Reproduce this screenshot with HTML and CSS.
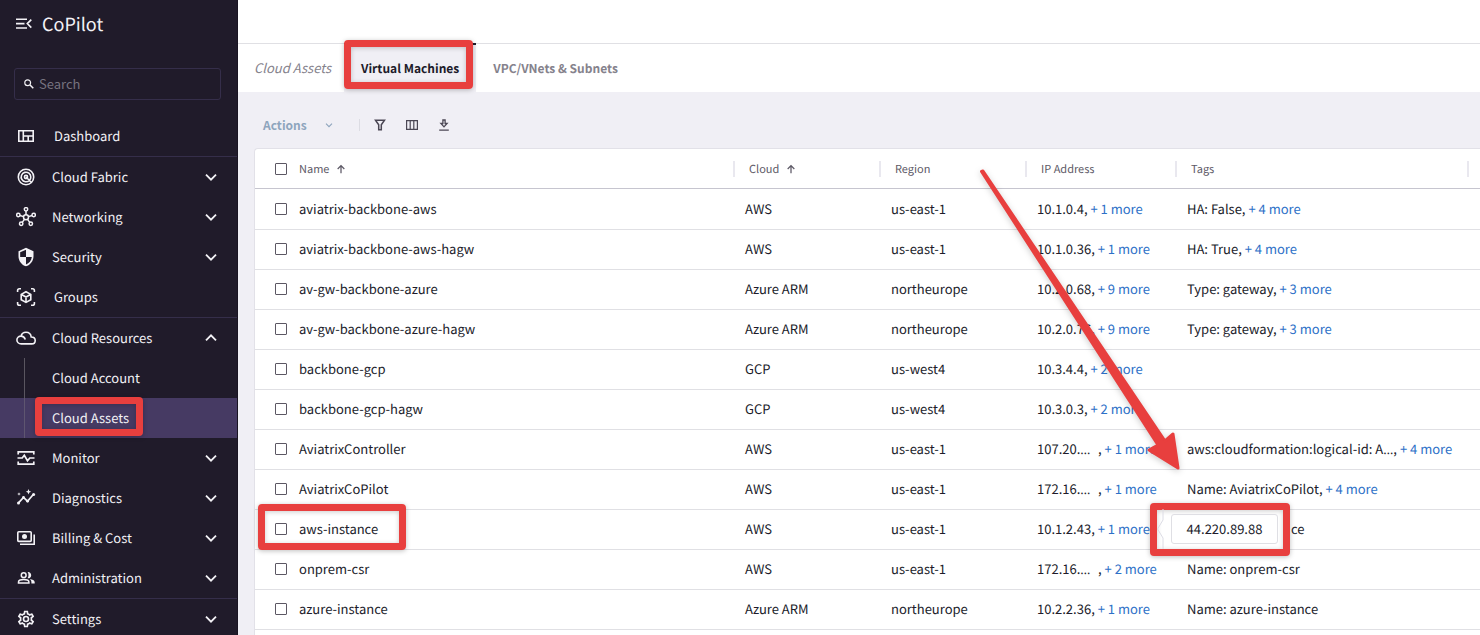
FILE: index.html
```html
<!DOCTYPE html>
<html lang="en">
<head>
<meta charset="utf-8">
<title>CoPilot – Virtual Machines</title>
<link rel="stylesheet" href="styles.css">
</head>
<body>
<svg class="defs" aria-hidden="true">
  <symbol id="down" viewBox="0 0 24 24"><path d="M6 9.2l6 6 6-6" fill="none" stroke="currentColor" stroke-width="2.2"/></symbol>
  <symbol id="up" viewBox="0 0 24 24"><path d="M6 14.8l6-6 6 6" fill="none" stroke="currentColor" stroke-width="2.2"/></symbol>
  <symbol id="sort" viewBox="0 0 12 12"><path d="M6 11V2M2 6l4-4 4 4" fill="none" stroke="currentColor" stroke-width="1.5"/></symbol>
</svg>
<div class="app">
  <aside class="sidebar">
    <header class="brand">
      <button class="icon-btn" type="button" aria-label="Collapse menu"><svg width="16" height="12" viewBox="0 0 16 12" fill="none" stroke="currentColor" stroke-width="1.6"><path d="M0 1.2h11M0 5.6h8.500M0 10h11M15.300 1.600l-4 4 4 4"/></svg></button>
      <span>CoPilot</span>
    </header>
    <label class="search">
      <svg width="10" height="10" viewBox="0 0 10 10" fill="none" stroke="currentColor"><circle cx="3.700" cy="3.700" r="2.900" stroke-width="1.200"/><path d="M5.800 5.800l3.500 3.500" stroke-width="1.500"/></svg>
      <input type="text" placeholder="Search" aria-label="Search">
    </label>
    <nav class="nav" aria-label="Main">
      <div class="group">
        <a class="item leaf" href="#"><svg class="ico" viewBox="0 0 20 20" fill="none" stroke="currentColor" stroke-width="1.600"><path d="M2.800 4.800h14.400v10.400H2.800zM7.300 4.800v10.400M7.300 10h9.900M12.200 10v5.200"/></svg><span>Dashboard</span></a>
      </div>
      <div class="group">
        <a class="item" href="#"><svg class="ico" viewBox="0 0 20 20" fill="none" stroke="currentColor" stroke-width="1.600"><circle cx="10" cy="10" r="7.700"/><path d="M13.400 13.400A4.800 4.800 0 1 1 14.800 10c0 1.200-.4 2.200-1.200 3.200M10 10l5.500 5.500"/><circle cx="10" cy="10" r="1.600"/></svg><span>Cloud Fabric</span><svg class="chev"><use href="#down"/></svg></a>
        <a class="item" href="#"><svg class="ico" viewBox="0 0 20 20" fill="none" stroke="currentColor" stroke-width="1.500"><circle cx="10" cy="10.300" r="2.500"/><circle cx="10" cy="2.300" r="1.700"/><circle cx="2.300" cy="8" r="1.700"/><circle cx="17.700" cy="8" r="1.700"/><circle cx="5.200" cy="16.800" r="1.700"/><circle cx="14.800" cy="16.800" r="1.700"/><path d="M10 4v3.800M4 8.500l3.600 1.100M16 8.500l-3.600 1.100M6.200 15.400l2.300-3M13.800 15.400l-2.300-3"/></svg><span>Networking</span><svg class="chev"><use href="#down"/></svg></a>
        <a class="item" href="#"><svg class="ico" viewBox="0 0 24 24" fill="currentColor"><path d="M12 1 3 5v6c0 5.550 3.840 10.740 9 12 5.160-1.260 9-6.450 9-12V5zm0 10.990h7c-.53 4.120-3.280 7.790-7 8.940V12H5V6.300l7-3.110z"/></svg><span>Security</span><svg class="chev"><use href="#down"/></svg></a>
        <a class="item leaf" href="#"><svg class="ico" viewBox="0 0 20 20" fill="none" stroke="currentColor" stroke-width="1.600"><path d="M1.600 5V3.500Q1.600 1.700 3.400 1.700H5M15 1.700h1.600q1.800 0 1.800 1.800V5M18.400 15v1.500q0 1.800-1.800 1.800H15M5 18.300H3.400q-1.800 0-1.800-1.800V15M10 4.700l4.800 2.700v5.300L10 15.400l-4.800-2.700V7.400zM5.400 7.500L10 10l4.600-2.500M10 10v5"/></svg><span>Groups</span></a>
      </div>
      <div class="group">
        <a class="item" href="#" aria-expanded="true"><svg class="ico" viewBox="0 0 20 20" fill="none" stroke="currentColor" stroke-width="1.600"><path d="M5 8.200C5.600 5.500 7.500 4.200 10 4.200c2.700 0 4.900 2 5.200 4.800 2.400 0 4 1.500 4 3.500 0 1.900-1.400 3.400-3.500 3.400H5.200c-2.400 0-4.300-1.700-4.300-3.900 0-2.100 1.700-3.900 4.100-3.900 2.200 0 3.700 1.400 4.300 3.300"/></svg><span>Cloud Resources</span><svg class="chev"><use href="#up"/></svg></a>
        <div class="subnav">
          <a class="item sub" href="#">Cloud Account</a>
          <a class="item sub active" href="#" aria-current="page">Cloud Assets<i class="mark mark-nav"></i></a>
        </div>
        <a class="item" href="#"><svg class="ico" viewBox="0 0 20 20" fill="none" stroke="currentColor" stroke-width="1.700"><path d="M2.200 6.500V3.900h15.600v2.600M2.200 13.500v2.600h15.600v-2.600M1.500 10h4.700l2.100-2.800 3.200 5.500 2.300-2.700h4.700"/></svg><span>Monitor</span><svg class="chev"><use href="#down"/></svg></a>
        <a class="item" href="#"><svg class="ico" viewBox="0 0 20 20" fill="none" stroke="currentColor" stroke-width="1.700"><path d="M2.500 14.800l5-5.300 4 3.700 6-7"/><g fill="currentColor" stroke="none"><circle cx="2.500" cy="14.900" r="1.500"/><circle cx="7.500" cy="9.400" r="1.400"/><circle cx="11.600" cy="13.200" r="1.400"/><circle cx="17.600" cy="6.400" r="1.500"/><path d="M12.500 1l.8 1.900 1.900.8-1.900.8-.8 1.900-.8-1.900-1.900-.8 1.900-.8zM3 4.200l.5 1.300 1.300.5-1.300.5L3 7.800l-.5-1.300L1.200 6l1.300-.5z"/></g></svg><span>Diagnostics</span><svg class="chev"><use href="#down"/></svg></a>
        <a class="item" href="#"><svg class="ico" viewBox="0 0 20 20" fill="none" stroke="currentColor" stroke-width="1.600"><rect x="1.800" y="3.800" width="13.400" height="9.600" rx="1"/><path d="M18.200 6.500v9.800H4"/><circle cx="8.500" cy="8.600" r="2.500" fill="currentColor" stroke="none"/></svg><span>Billing &amp; Cost</span><svg class="chev"><use href="#down"/></svg></a>
        <a class="item" href="#"><svg class="ico" viewBox="0 0 20 20" fill="none" stroke="currentColor" stroke-width="1.500"><circle cx="7.700" cy="7.200" r="2.400"/><path d="M2.500 14.900v-1c0-1.500 2.700-2.400 5.200-2.400s5.200.9 5.200 2.400v1z"/><path d="M11.600 4.100c2-.3 3.600 1.100 3.600 3.100s-1.600 3.400-3.600 3.100c1.200-1.900 1.200-4.300 0-6.200zM13.800 11c2.700.4 4.900 1.400 4.900 3.300v1.300h-3.300v-1.400c0-1.300-.6-2.300-1.600-3.200z" fill="currentColor" stroke="none"/></svg><span>Administration</span><svg class="chev"><use href="#down"/></svg></a>
      </div>
      <div class="group">
        <a class="item" href="#"><svg class="ico" viewBox="0 0 24 24" fill="currentColor"><path d="M19.430 12.980c.04-.32.070-.64.070-.98s-.03-.66-.07-.98l2.110-1.650c.19-.15.240-.42.120-.64l-2-3.460c-.12-.22-.39-.3-.61-.22l-2.490 1c-.52-.4-1.080-.73-1.690-.98l-.38-2.650C14.460 2.180 14.250 2 14 2h-4c-.25 0-.46.180-.49.420l-.38 2.650c-.61.250-1.170.59-1.690.98l-2.490-1c-.23-.09-.49 0-.61.220l-2 3.460c-.13.220-.07.490.12.640l2.110 1.650c-.04.320-.07.650-.07.980s.03.660.07.980l-2.110 1.650c-.19.150-.24.420-.12.640l2 3.460c.12.220.39.300.61.220l2.490-1c.52.400 1.080.730 1.690.980l.38 2.650c.03.240.24.420.49.420h4c.25 0 .46-.18.490-.42l.38-2.650c.61-.25 1.170-.59 1.690-.98l2.490 1c.23.090.49 0 .61-.22l2-3.460c.12-.22.070-.49-.12-.64zM17.450 11.270c.04.310.05.520.05.730s-.02.430-.05.730l-.14 1.130.89.700 1.080.84-.7 1.210-1.270-.51-1.040-.42-.9.680c-.43.320-.84.560-1.250.73l-1.060.43-.16 1.130-.2 1.350h-1.400l-.19-1.350-.16-1.130-1.060-.43c-.43-.18-.83-.41-1.230-.71l-.91-.7-1.060.43-1.270.51-.7-1.210 1.080-.84.890-.7-.14-1.130c-.03-.31-.05-.54-.05-.74s.02-.43.050-.73l.14-1.130-.89-.7-1.080-.84.700-1.210 1.270.51 1.040.42.900-.68c.43-.32.840-.56 1.250-.73l1.060-.43.160-1.130.2-1.350h1.390l.19 1.350.16 1.130 1.060.43c.43.180.83.410 1.230.71l.91.700 1.060-.43 1.270-.51.7 1.210-1.070.85-.89.700zM12 8a4 4 0 1 0 0 8 4 4 0 0 0 0-8zm0 6a2 2 0 1 1 0-4 2 2 0 0 1 0 4z"/></svg><span>Settings</span><svg class="chev"><use href="#down"/></svg></a>
      </div>
    </nav>
  </aside>
  <main class="main">
    <div class="topbar"></div>
    <nav class="tabs" aria-label="Views">
      <span class="crumb">Cloud Assets</span>
      <a class="tab active" href="#" aria-current="page">Virtual Machines<i class="mark mark-tab"></i></a>
      <a class="tab" href="#">VPC/VNets &amp; Subnets</a>
    </nav>
    <div class="toolbar">
      <button class="actions" type="button" disabled>Actions<svg width="12" height="12"><use href="#down"/></svg></button>
      <button class="icon-btn" type="button" aria-label="Filter"><svg width="12" height="12" viewBox="0 0 12 12" fill="none" stroke="currentColor" stroke-width="1.500"><path d="M1.500 1.200h9L7.300 5.700v5.100H4.700V5.700z"/></svg></button>
      <button class="icon-btn" type="button" aria-label="Columns"><svg width="12" height="12" viewBox="0 0 12 12" fill="none" stroke="currentColor" stroke-width="1.200"><path d="M.6 1.600h10.800v8.800H.6zM4.200 1.600v8.800M7.800 1.600v8.800"/></svg></button>
      <button class="icon-btn" type="button" aria-label="Download"><svg width="12" height="12" viewBox="0 0 12 12" fill="none" stroke="currentColor" stroke-width="1.300"><path d="M1.200 11.200h9.600M4.900 1h2.200v3.500h2L6 7.900 2.900 4.500h2z"/></svg></button>
    </div>
    <div class="card">
      <table>
        <colgroup><col><col class="c-cloud"><col class="c-region"><col class="c-ip"><col class="c-tags"><col class="c-end"></colgroup>
        <thead>
          <tr><th><input type="checkbox" aria-label="Select all">Name<svg class="sort"><use href="#sort"/></svg></th><th>Cloud<svg class="sort"><use href="#sort"/></svg></th><th>Region</th><th>IP Address</th><th>Tags</th><td></td></tr>
        </thead>
        <tbody>
          <tr><td><label><input type="checkbox">aviatrix-backbone-aws</label></td><td>AWS</td><td>us-east-1</td><td>10.1.0.4, <a href="#">+ 1 more</a></td><td>HA: False, <a href="#">+ 4 more</a></td><td></td></tr>
          <tr><td><label><input type="checkbox">aviatrix-backbone-aws-hagw</label></td><td>AWS</td><td>us-east-1</td><td>10.1.0.36, <a href="#">+ 1 more</a></td><td>HA: True, <a href="#">+ 4 more</a></td><td></td></tr>
          <tr><td><label><input type="checkbox">av-gw-backbone-azure</label></td><td>Azure ARM</td><td>northeurope</td><td>10.2.0.68, <a href="#">+ 9 more</a></td><td>Type: gateway, <a href="#">+ 3 more</a></td><td></td></tr>
          <tr><td><label><input type="checkbox">av-gw-backbone-azure-hagw</label></td><td>Azure ARM</td><td>northeurope</td><td>10.2.0.76, <a href="#">+ 9 more</a></td><td>Type: gateway, <a href="#">+ 3 more</a></td><td></td></tr>
          <tr><td><label><input type="checkbox">backbone-gcp</label></td><td>GCP</td><td>us-west4</td><td>10.3.4.4, <a href="#">+ 2 more</a></td><td></td><td></td></tr>
          <tr><td><label><input type="checkbox">backbone-gcp-hagw</label></td><td>GCP</td><td>us-west4</td><td>10.3.0.3, <a href="#">+ 2 more</a></td><td></td><td></td></tr>
          <tr><td><label><input type="checkbox">AviatrixController</label></td><td>AWS</td><td>us-east-1</td><td><span class="cut">107.20.<span class="dots">…</span></span>, <a href="#">+ 1 more</a></td><td>aws:cloudformation:logical-id: A<span class="dots">…</span>, <a href="#">+ 4 more</a></td><td></td></tr>
          <tr><td><label><input type="checkbox">AviatrixCoPilot</label></td><td>AWS</td><td>us-east-1</td><td><span class="cut">172.16.<span class="dots">…</span></span>, <a href="#">+ 1 more</a></td><td>Name: AviatrixCoPilot, <a href="#">+ 4 more</a></td><td></td></tr>
          <tr><td class="anchor"><label><input type="checkbox">aws-instance</label><i class="mark mark-row"></i></td><td>AWS</td><td>us-east-1</td><td>10.1.2.43, <a href="#">+ 1 more</a></td><td class="anchor behind-tip">
            <div class="tip" role="tooltip"><svg class="tip-edge" width="7" height="40" viewBox="0 0 7 40" fill="none" stroke="#dcdce4"><path d="M6 0v11L.5 20 6 29v11"/></svg><span class="tip-box">44.220.89.88</span></div>ce</td><td></td></tr>
          <tr><td><label><input type="checkbox">onprem-csr</label></td><td>AWS</td><td>us-east-1</td><td><span class="cut">172.16.<span class="dots">…</span></span>, <a href="#">+ 2 more</a></td><td>Name: onprem-csr</td><td></td></tr>
          <tr><td><label><input type="checkbox">azure-instance</label></td><td>Azure ARM</td><td>northeurope</td><td>10.2.2.36, <a href="#">+ 1 more</a></td><td>Name: azure-instance</td><td></td></tr>
        </tbody>
      </table>
      <svg class="arrow" width="210" height="310" viewBox="975 165 210 310" fill="#e83f3e" stroke="#e83f3e" stroke-linejoin="round" aria-hidden="true"><path stroke-width="3" d="M981.500 171.500l1.500-.5L1165 441l8-7 5 34-29-18 9-5z"/></svg>
    </div>
  </main>
</div>
</body>
</html>
```

FILE: styles.css
```css
* { box-sizing: border-box; }

body {
  margin: 0;
  background: #f0eff5;
  color: #201b2a;
  font: 13px/20px "Noto Sans CJK SC", "Noto Sans", sans-serif;
  text-rendering: geometricPrecision;
}

a { color: #2d70c7; text-decoration: none; }
button, input { font: inherit; }
.defs { position: absolute; width: 0; height: 0; }

.app { display: flex; height: 100vh; overflow: hidden; }

.sidebar {
  flex: 0 0 238px;
  background: #201b2a;
  border-right: 1px solid #191422;
  color: #f3f2f6;
}

.brand {
  display: flex;
  align-items: center;
  gap: 10px;
  height: 48px;
  padding: 0 16px;
  font-size: 18px;
}

.icon-btn {
  display: flex;
  padding: 0;
  border: 0;
  background: none;
  color: inherit;
}

.search {
  display: flex;
  align-items: center;
  gap: 5px;
  height: 32px;
  margin: 20px 16px 16px 14px;
  padding: 0 9px;
  border: 1px solid #352e4a;
  border-radius: 3px;
}
.search input {
  flex: 1;
  min-width: 0;
  padding: 0;
  border: 0;
  outline: 0;
  background: none;
  color: inherit;
}
.search input::placeholder { color: #77737f; opacity: 1; }

.group + .group { border-top: 1px solid #352e4a; }
.item {
  position: relative;
  display: flex;
  align-items: center;
  gap: 16px;
  height: 40px;
  padding: 0 16px;
  color: inherit;
}
.item span { flex: 1; }
.item.leaf { gap: 18px; }
.ico { flex: none; width: 20px; height: 20px; }
.chev { width: 20px; height: 20px; }
.subnav {
  background: linear-gradient(#5a5660, #5a5660) 24px 0 / 1px 100% no-repeat;
}
.item.sub { padding-left: 52px; }
.item.sub.active {
  background: linear-gradient(#5f5670, #5f5670) 24px 0 / 1px 100% no-repeat #463a63;
}

.mark {
  position: absolute;
  border: 7px solid #e83f3e;
  border-radius: 4px;
  box-shadow: 0 1px 5px rgba(0, 0, 0, .25), inset 0 1px 5px rgba(0, 0, 0, .2);
  pointer-events: none;
}
.mark-nav { left: 35px; top: -1px; width: 108px; height: 39px; }
.mark-tab { inset: -4px 3px 3px 0; }
.mark-row { left: 3px; top: -6px; width: 148px; height: 46px; }

.main { flex: 1; min-width: 0; display: flex; flex-direction: column; }
.topbar { height: 44px; flex: none; background: #fff; border-bottom: 1px solid #e0e0e4; }
.tabs { display: flex; height: 48px; flex: none; background: #fff; }
.crumb, .tab {
  display: flex;
  align-items: center;
  padding: 0 16px;
  color: #85828c;
}
.crumb { padding-right: 13px; font-style: italic; }
.tab { padding: 1px 17px 0; font-size: 12px; font-weight: 700; }
.tab.active {
  position: relative;
  background: #f0eff5;
  box-shadow: 0 -1px #201b2a, inset 0 1px #201b2a;
  color: #201b2a;
}

.toolbar {
  display: flex;
  align-items: center;
  gap: 20px;
  flex: none;
  height: 56px;
  padding: 9px 25px 0;
  color: #4b4754;
}
.actions {
  display: flex;
  align-items: center;
  gap: 16px;
  margin-right: -6px;
  padding: 0 25px 0 0;
  border: 0;
  background: linear-gradient(#dcdce3, #dcdce3) right / 1px 12px no-repeat;
  color: #8ea5bd;
  font-size: 12px;
  font-weight: 700;
}

.card {
  position: relative;
  flex: 1;
  min-height: 0;
  margin-left: 16px;
  border: solid #e2e1e8;
  border-width: 1px 0 0 1px;
  border-radius: 4px 0 0 0;
  background: #fff;
}

table { width: 100%; table-layout: fixed; border-collapse: separate; border-spacing: 0; }
.c-cloud, .c-region { width: 146px; }
.c-ip { width: 150px; }
.c-tags { width: 292px; }
.c-end { width: 13px; }

th, td { padding: 0 12px; text-align: left; white-space: nowrap; vertical-align: middle; }
thead tr { height: 40px; }
thead th, thead td { border-bottom: 1px solid #c6c5cf; }
th {
  padding: 0 16px;
  color: #5d5966;
  font-size: 11px;
  font-weight: 400;
}
th + th, th + td { background: linear-gradient(#e9e8ef, #e9e8ef) left / 2px 16px no-repeat; }
tbody td { height: 40px; padding-bottom: 1px; border-bottom: 1px solid #e0e0e4; }
tbody tr:first-child td { height: 41px; }
th:first-child, td:first-child { padding-left: 20px; }
td:last-child { padding: 0; }

input[type="checkbox"] {
  appearance: none;
  width: 12px;
  height: 12px;
  margin: 0 12px 0 0;
  border: 1px solid #5b5763;
  border-radius: 1px;
  background: #fff;
  vertical-align: -1px;
}
th input[type="checkbox"] { vertical-align: -2px; }
.sort { width: 10px; height: 10px; margin-left: 7px; vertical-align: -1px; }
.cut { display: inline-block; width: 61px; overflow: hidden; vertical-align: top; }
.dots { font-family: "Open Sans", sans-serif; line-height: 1; }

.anchor { position: relative; }
.behind-tip { padding-left: 116px; }
.tip {
  position: absolute;
  left: -25px;
  top: -7px;
  display: flex;
  align-items: center;
  gap: 7px;
  padding: 0 5px 1px 0;
  width: 140px;
  height: 53px;
  border: 7px solid #e83f3e;
  border-radius: 4px;
  background: #fff;
  box-shadow: 0 1px 5px rgba(0, 0, 0, .25), inset 0 1px 5px rgba(0, 0, 0, .2);
}
.tip-box {
  flex: 1;
  padding: 4px 0;
  border: 1px solid #dfdfe4;
  border-radius: 3px;
  text-align: center;
}

.arrow {
  position: absolute;
  left: 720px;
  top: 16px;
  filter: drop-shadow(0 2px 3px rgba(0, 0, 0, .2));
  pointer-events: none;
}
```
